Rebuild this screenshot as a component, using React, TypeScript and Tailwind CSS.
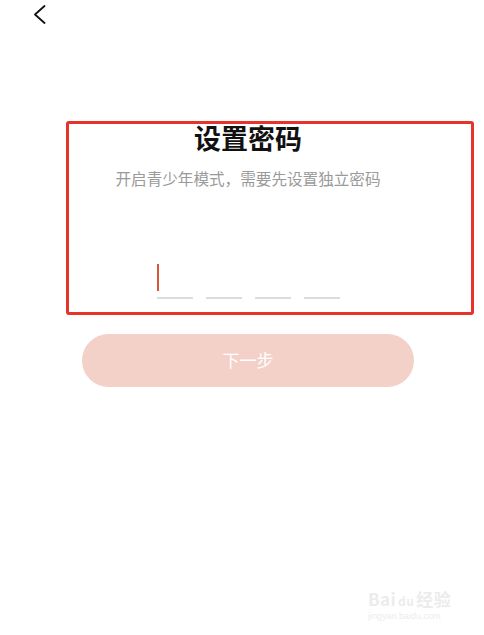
export default function App() {
  const slots = [0, 1, 2, 3];
  return (
    <div className="relative w-[484px] h-[635px] bg-white overflow-hidden font-['Noto_Sans_CJK_SC','Noto_Sans',sans-serif]">
      {/* top bar */}
      <div className="pl-[33px] pt-[5px] h-[23px]">
        <svg width="13" height="19" viewBox="0 0 13 19" fill="none">
          <path d="M11.5 1 L2 9.5 L11.5 18" stroke="#111" strokeWidth="1.8" strokeLinecap="round" strokeLinejoin="round" />
        </svg>
      </div>

      {/* content */}
      <div className="w-[332px] ml-[82px] flex flex-col items-center">
        <h1 className="mt-[101px] text-[27px] leading-none font-bold text-[#111]">设置密码</h1>
        <p className="mt-[20px] text-[15.6px] leading-none text-[#9a9a9a]">开启青少年模式，需要先设置独立密码</p>

        <div className="mt-[77px] flex gap-[13px]">
          {slots.map((i) => (
            <div key={i} className="w-[36px] flex flex-col">
              <div className="h-[27px]">
                {i === 0 && <div className="w-[2px] h-[27px] bg-[#d9553a]" />}
              </div>
              <div className="mt-[6px] h-[2px] bg-[#dcdcdc]" />
            </div>
          ))}
        </div>

        <button className="mt-[35px] w-[332px] h-[53px] rounded-full bg-[#f3d0c8] text-white text-[17px] flex items-center justify-center">
          下一步
        </button>
      </div>

      {/* annotation frame */}
      <div className="absolute left-[66px] top-[121px] w-[408px] h-[194px] border-[3px] border-[#e8332a] rounded-[3px]" />

      {/* watermark */}
      <div className="absolute left-[368px] top-[590px] text-[#ececec] leading-none">
        <div className="text-[17px] font-bold tracking-wide">Bai<span className="text-[12px] mx-[2px]">du</span>经验</div>
        <div className="mt-[5px] text-[9px] font-['Liberation_Sans']">jingyan.baidu.com</div>
      </div>
    </div>
  );
}
